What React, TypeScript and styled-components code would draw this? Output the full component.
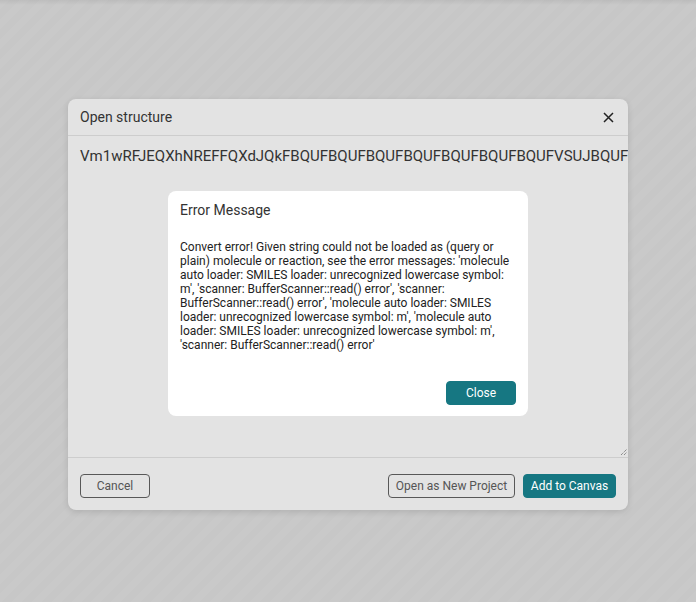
import React from "react";
import styled, { createGlobalStyle } from "styled-components";

const Global = createGlobalStyle`
  html, body { margin: 0; padding: 0; }
  body { font-family: Roboto, "Liberation Sans", sans-serif; color: #333; }
  * { box-sizing: border-box; }
`;

const Page = styled.div`
  position: relative;
  width: 696px;
  height: 602px;
  padding-top: 99px;
  display: flex;
  justify-content: center;
  align-items: flex-start;
  background-color: #c9c9c9;
  background-image:
    linear-gradient(to bottom, rgba(0,0,0,0.06), rgba(0,0,0,0) 5px),
    repeating-linear-gradient(135deg, #c9c9c9 0 7px, #c7c7c7 7px 14px);
  overflow: hidden;
`;

const Dialog = styled.div`
  width: 560px;
  height: 411px;
  background: #e3e3e3;
  border-radius: 8px;
  box-shadow: 0 2px 6px rgba(0,0,0,0.12);
  display: flex;
  flex-direction: column;
  overflow: hidden;
`;

const Header = styled.div`
  height: 37px;
  flex: none;
  display: flex;
  align-items: center;
  justify-content: space-between;
  padding: 0 12px;
  border-bottom: 1px solid #cdcdcd;
`;

const Title = styled.div`
  font-size: 14px;
  color: #333;
`;

const CloseX = styled.button`
  border: none;
  background: transparent;
  padding: 0;
  width: 16px;
  height: 16px;
  display: flex;
  align-items: center;
  justify-content: center;
  cursor: pointer;
`;

const Body = styled.div`
  flex: 1;
  position: relative;
  border-bottom: 1px solid #cdcdcd;
`;

const TextArea = styled.div`
  padding: 11px 12px;
  font-size: 15px;
  line-height: 18px;
  color: #333;
  white-space: nowrap;
  overflow: hidden;
`;

const Grip = styled.svg`
  position: absolute;
  right: 0;
  bottom: 1px;
`;

const Footer = styled.div`
  height: 52px;
  flex: none;
  display: flex;
  align-items: center;
  padding: 3px 12px 0;
  gap: 8px;
`;

const Spacer = styled.div`
  flex: 1;
`;

const Button = styled.button<{ $primary?: boolean; $w: number }>`
  height: 24px;
  width: ${(p) => p.$w}px;
  padding: 0;
  border-radius: 4px;
  font-family: Roboto, "Liberation Sans", sans-serif;
  font-size: 12px;
  cursor: pointer;
  border: 1px solid ${(p) => (p.$primary ? "#167782" : "#585858")};
  background: ${(p) => (p.$primary ? "#167782" : "transparent")};
  color: ${(p) => (p.$primary ? "#ffffff" : "#555")};
`;

const ErrorModal = styled.div`
  position: absolute;
  left: 168px;
  top: 191px;
  width: 360px;
  height: 225px;
  background: #ffffff;
  border-radius: 8px;
  padding: 10px 12px 11px;
  display: flex;
  flex-direction: column;
`;

const ErrorTitle = styled.div`
  font-size: 14px;
  line-height: 18px;
  color: #333;
`;

const ErrorText = styled.div`
  margin-top: 21px;
  font-family: Roboto, "Liberation Sans", sans-serif;
  font-size: 12px;
  line-height: 14px;
  color: #222;
`;

const ErrorActions = styled.div`
  margin-top: auto;
  display: flex;
  justify-content: flex-end;
`;

export default function App() {
  return (
    <Page>
      <Global />
      <Dialog>
        <Header>
          <Title>Open structure</Title>
          <CloseX aria-label="close">
            <svg width="11" height="11" viewBox="0 0 11 11">
              <path d="M1 1L10 10M10 1L1 10" stroke="#222" strokeWidth="1.5" />
            </svg>
          </CloseX>
        </Header>
        <Body>
          <TextArea>
            Vm1wRFJEQXhNREFFQXdJQkFBQUFBQUFBQUFBQUFBQUFBQUFBQUFVSUJBQUFB
          </TextArea>
          <Grip width="8" height="8" viewBox="0 0 8 8">
            <path d="M1 7L7 1M4 7L7 4" stroke="#666" strokeWidth="1" strokeDasharray="1 1" />
          </Grip>
        </Body>
        <Footer>
          <Button $w={70}>Cancel</Button>
          <Spacer />
          <Button $w={127}>Open as New Project</Button>
          <Button $w={93} $primary>Add to Canvas</Button>
        </Footer>
      </Dialog>
      <ErrorModal>
        <ErrorTitle>Error Message</ErrorTitle>
        <ErrorText>
          Convert error! Given string could not be loaded as (query or plain) molecule or reaction, see the error messages: 'molecule auto loader: SMILES loader: unrecognized lowercase symbol: m', 'scanner: BufferScanner::read() error', 'scanner: BufferScanner::read() error', 'molecule auto loader: SMILES loader: unrecognized lowercase symbol: m', 'molecule auto loader: SMILES loader: unrecognized lowercase symbol: m', 'scanner: BufferScanner::read() error'
        </ErrorText>
        <ErrorActions>
          <Button $w={70} $primary>Close</Button>
        </ErrorActions>
      </ErrorModal>
    </Page>
  );
}
